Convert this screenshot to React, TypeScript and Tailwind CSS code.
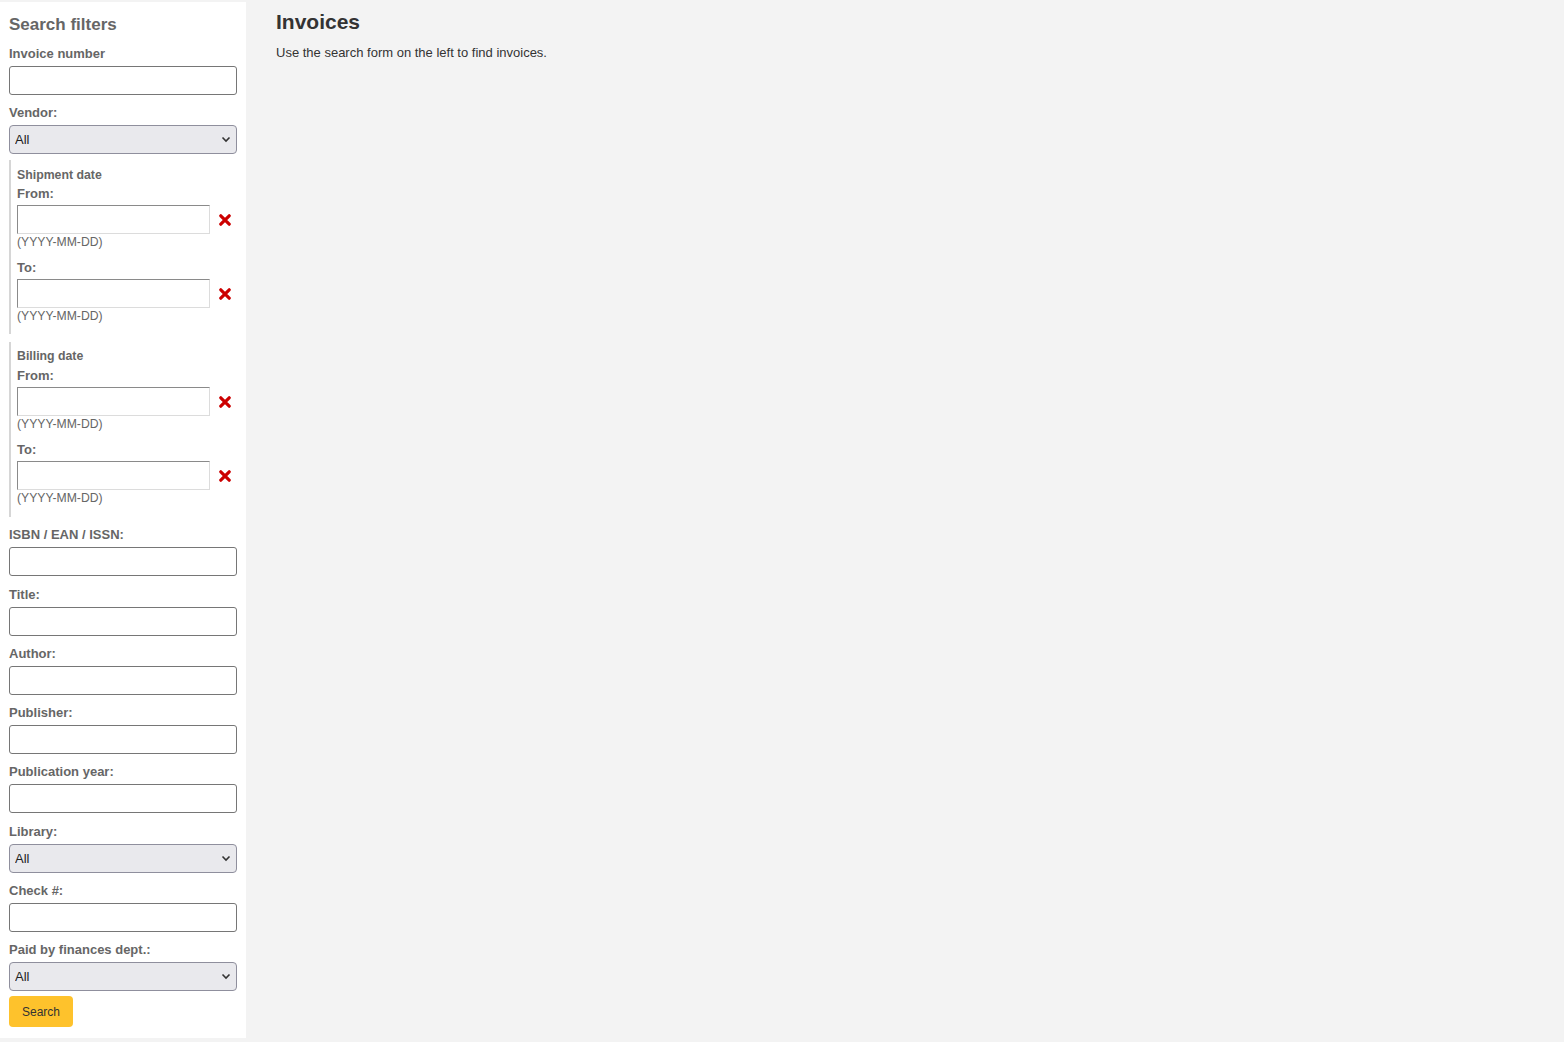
import type { ReactNode } from 'react'

const font = { fontFamily: '"Liberation Sans", Arial, sans-serif' }

function Label({ children }: { children: ReactNode }) {
  return <div className="h-[18px] text-[13px] font-bold leading-[18px] text-[#666]">{children}</div>
}

function TextInput() {
  return <input type="text" className="mt-[3px] block h-[29px] w-[228px] rounded-[3px] border border-[#767676] bg-white" />
}

function Select() {
  return (
    <div className="relative mt-[3px] h-[29px] w-[228px]">
      <select className="h-full w-full appearance-none rounded-[4px] border border-[#8f8f9d] bg-[#e9e9ed] pl-[5px] text-[13px] text-[#222]">
        <option>All</option>
      </select>
      <svg className="pointer-events-none absolute right-[6px] top-[11px]" width="10" height="7" viewBox="0 0 10 7">
        <path d="M1.5 1.5 L5 5 L8.5 1.5" fill="none" stroke="#333" strokeWidth="1.6" />
      </svg>
    </div>
  )
}

function Field({ label, select, gap = 'mt-[9.3px]' }: { label: string; select?: boolean; gap?: string }) {
  return (
    <div className={gap}>
      <Label>{label}</Label>
      {select ? <Select /> : <TextInput />}
    </div>
  )
}

function ClearIcon() {
  return (
    <svg width="12" height="12" viewBox="0 0 12 12" className="ml-[9px]">
      <path d="M1.8 1.8 L10.2 10.2 M10.2 1.8 L1.8 10.2" stroke="#cc0000" strokeWidth="3.2" strokeLinecap="round" />
    </svg>
  )
}

function DateInput({ label, top }: { label: string; top: string }) {
  return (
    <div className={top}>
      <div className="h-4 text-[13px] font-bold leading-4 text-[#666]">{label}</div>
      <div className="mt-[3px] flex items-center">
        <input
          type="text"
          className="h-[29px] w-[193px] border-t border-l border-r border-b border-t-[#8a8a8a] border-l-[#8a8a8a] border-r-[#dcdcdc] border-b-[#dcdcdc] bg-white"
        />
        <ClearIcon />
      </div>
      <div className="mt-[1px] h-[14px] text-[12.2px] leading-[14px] text-[#666]">(YYYY-MM-DD)</div>
    </div>
  )
}

function DateRange({ title, className, fromTop }: { title: string; className: string; fromTop: string }) {
  return (
    <div className={'border-l-2 border-[#d6d6d6] pl-[6px] ' + className}>
      <div className="h-4 text-[12.3px] font-bold leading-4 text-[#666]">{title}</div>
      <DateInput label="From:" top={fromTop} />
      <DateInput label="To:" top="mt-[11px]" />
    </div>
  )
}

export default function App() {
  return (
    <div className="flex min-h-[1042px] items-start bg-[#f3f3f3]" style={font}>
      <aside className="mt-[2px] w-[246px] bg-white px-[9px] pt-[13px] pb-[11px]">
        <h2 className="h-5 text-[17px] font-bold leading-5 text-[#666]">Search filters</h2>
        <Field label="Invoice number" gap="mt-[10px]" />
        <Field label="Vendor:" select gap="mt-[9px]" />
        <DateRange title="Shipment date" className="mt-[6px] pt-[7px] pb-[11px]" fromTop="mt-[3px]" />
        <DateRange title="Billing date" className="mt-2 pt-[6px] pb-3" fromTop="mt-1" />
        <Field label="ISBN / EAN / ISSN:" />
        <Field label="Title:" />
        <Field label="Author:" />
        <Field label="Publisher:" />
        <Field label="Publication year:" />
        <Field label="Library:" select />
        <Field label="Check #:" />
        <Field label="Paid by finances dept.:" select />
        <button className="mt-[5px] h-[31px] w-[64px] rounded-[4px] bg-[#fec22c] text-[12px] text-[#333]">Search</button>
      </aside>
      <main className="flex-1 pl-[30px] pt-[10px]">
        <h1 className="h-6 text-[21px] font-bold leading-6 text-[#333]">Invoices</h1>
        <p className="mt-[10px] text-[13px] leading-[18px] text-[#333]">Use the search form on the left to find invoices.</p>
      </main>
    </div>
  )
}
